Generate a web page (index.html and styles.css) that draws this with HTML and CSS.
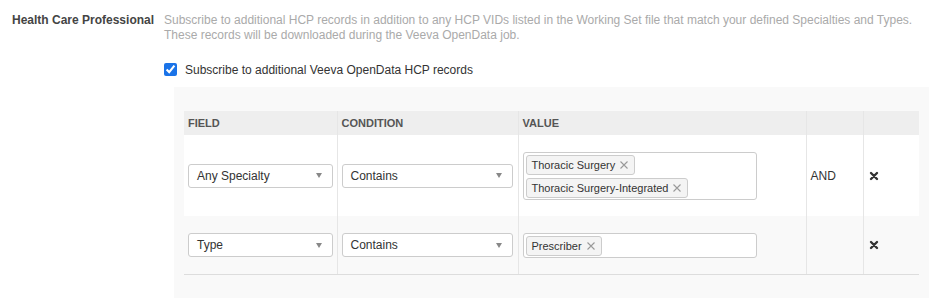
FILE: index.html
```html
<!DOCTYPE html>
<html>
<head>
<meta charset="utf-8">
<link rel="stylesheet" href="styles.css">
</head>
<body>
<div class="setting">
  <div class="setting-label">Health Care Professional</div>
  <div class="setting-body">
    <p class="desc">Subscribe to additional HCP records in addition to any HCP VIDs listed in the Working Set file that match your defined Specialties and Types. These records will be downloaded during the Veeva OpenData job.</p>
    <label class="check-row"><input type="checkbox" checked class="check"><span>Subscribe to additional Veeva OpenData HCP records</span></label>
    <div class="panel">
      <table class="rules">
        <colgroup>
          <col class="c-field"><col class="c-cond"><col class="c-value"><col class="c-and"><col class="c-del">
        </colgroup>
        <thead>
          <tr><th>FIELD</th><th>CONDITION</th><th>VALUE</th><th></th><th></th></tr>
        </thead>
        <tbody>
          <tr class="r1">
            <td><div class="select select-field"><span>Any Specialty</span><i class="caret"></i></div></td>
            <td><div class="select select-cond"><span>Contains</span><i class="caret"></i></div></td>
            <td><div class="tagbox">
              <span class="tag">Thoracic Surgery<svg class="tx" viewBox="0 0 10 10"><path d="M1.5 1.5 8.5 8.5M8.5 1.5 1.5 8.5"/></svg></span>
              <span class="tag">Thoracic Surgery-Integrated<svg class="tx" viewBox="0 0 10 10"><path d="M1.5 1.5 8.5 8.5M8.5 1.5 1.5 8.5"/></svg></span>
            </div></td>
            <td class="and">AND</td>
            <td class="del"><svg class="delx" viewBox="0 0 10 10"><path d="M2 2 8 8M8 2 2 8"/></svg></td>
          </tr>
          <tr class="r2">
            <td><div class="select select-field"><span>Type</span><i class="caret"></i></div></td>
            <td><div class="select select-cond"><span>Contains</span><i class="caret"></i></div></td>
            <td><div class="tagbox">
              <span class="tag">Prescriber<svg class="tx" viewBox="0 0 10 10"><path d="M1.5 1.5 8.5 8.5M8.5 1.5 1.5 8.5"/></svg></span>
            </div></td>
            <td class="and"></td>
            <td class="del"><svg class="delx" viewBox="0 0 10 10"><path d="M2 2 8 8M8 2 2 8"/></svg></td>
          </tr>
        </tbody>
      </table>
    </div>
  </div>
</div>
</body>
</html>
```
FILE: styles.css
```css
html, body {
  margin: 0;
  padding: 0;
  background: #fff;
}
body {
  font-family: "Liberation Sans", Arial, sans-serif;
  font-size: 12px;
  color: #333;
}
.setting {
  display: flex;
  padding: 13px 8px 0 12px;
}
.setting-label {
  width: 152px;
  flex: none;
  font-weight: bold;
  color: #444;
  line-height: 15px;
}
.setting-body {
  flex: 1;
}
.desc {
  margin: 0;
  color: #aaa;
  line-height: 15px;
}
.check-row {
  display: flex;
  align-items: center;
  margin-top: 19px;
  height: 15px;
  color: #333;
}
.check {
  margin: 0 8px 0 0;
  width: 13px;
  height: 13px;
  accent-color: #1a73e8;
}
.panel {
  margin: 10px 0 0 10px;
  background: #f9f9f9;
  padding: 24px 10px 23px 10px;
}
.rules {
  width: 735px;
  table-layout: fixed;
  border-collapse: collapse;
}
.c-field { width: 153px; }
.c-cond { width: 181px; }
.c-value { width: 288px; }
.c-and { width: 57px; }
.c-del { width: 56px; }
.rules th {
  height: 24px;
  padding: 0 4px;
  background: #eeeeee;
  text-align: left;
  font-size: 11px;
  font-weight: bold;
  color: #555;
  border-left: 1px solid #e6e6e6;
}
.rules td {
  padding: 0 4px;
  vertical-align: middle;
  border-left: 1px solid #e6e6e6;
}
.rules th:first-child, .rules td:first-child {
  border-left: none;
}
.r1 td {
  height: 81px;
  background: #fff;
}
.r2 td {
  height: 58px;
  background: #f9f9f9;
  border-bottom: 1px solid #dddddd;
}
.select {
  box-sizing: border-box;
  height: 24px;
  border: 1px solid #cccccc;
  border-radius: 3px;
  background: #fff;
  display: flex;
  align-items: center;
  justify-content: space-between;
  padding: 0 10px 0 8px;
  color: #333;
}
.select-field { width: 145px; }
.select-cond { width: 171px; }
.caret {
  width: 0;
  height: 0;
  border-left: 3.5px solid transparent;
  border-right: 3.5px solid transparent;
  border-top: 5px solid #888;
}
.tagbox {
  box-sizing: border-box;
  width: 234px;
  border: 1px solid #cccccc;
  border-radius: 3px;
  background: #fff;
  padding: 2px 2px 1px 2px;
  display: flex;
  flex-wrap: wrap;
  align-items: flex-start;
  column-gap: 4px;
  row-gap: 3px;
}
.tag {
  box-sizing: border-box;
  height: 20px;
  display: inline-flex;
  align-items: center;
  gap: 4px;
  padding: 0 5px;
  border: 1px solid #cccccc;
  border-radius: 3px;
  background: #f4f4f4;
  font-size: 11px;
  color: #333;
}
.r1 .tagbox .tag:first-child {
  margin-right: 60px;
}
.tx {
  width: 10px;
  height: 10px;
  stroke: #999;
  stroke-width: 1.1;
  fill: none;
}
.and {
  color: #333;
}
.del {
  padding-left: 4px;
}
.delx {
  display: block;
  width: 10px;
  height: 10px;
  margin-left: 1px;
  stroke: #333;
  stroke-width: 2.4;
  stroke-linecap: round;
  fill: none;
}
```
